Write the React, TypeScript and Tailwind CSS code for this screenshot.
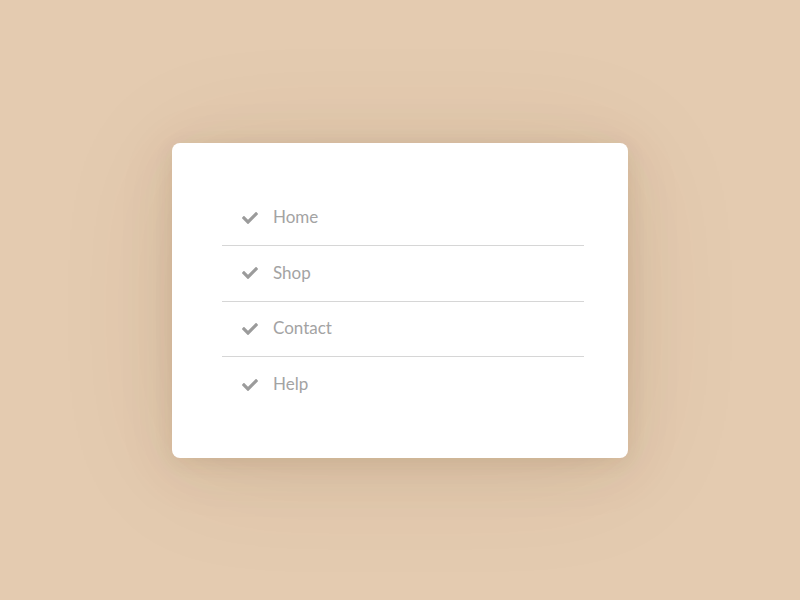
import { useState } from "react";

type Item = {
  label: string;
};

const items: Item[] = [
  { label: "Home" },
  { label: "Shop" },
  { label: "Contact" },
  { label: "Help" },
];

const Check = () => (
  <svg viewBox="0 0 512 512" className="h-[16px] w-[16px] fill-[#9b9b9b]">
    <path d="M173.9 439.4 7.5 273c-10-10-10-26.2 0-36.2l36.2-36.2c10-10 26.2-10 36.2 0L192 312.7 432.1 72.6c10-10 26.2-10 36.2 0l36.2 36.2c10 10 10 26.2 0 36.2L210.1 439.4c-10 10-26.2 10-36.2 0z" />
  </svg>
);

const App = () => {
  const [active, setActive] = useState(-1);

  return (
    <div className="flex h-[600px] w-[800px] items-center justify-center bg-[#e4cbb0]">
      <div
        className="h-[315px] w-[456px] rounded-[8px] bg-white pl-[50px] pr-[44px] pt-[48px]
        shadow-[0_4px_20px_rgba(90,50,10,0.08),0_10px_60px_rgba(90,50,10,0.09),0_10px_130px_rgba(90,50,10,0.08)]"
      >
        <ul className="font-['Lato','Open_Sans',sans-serif]">
          {items.map((item, i) => (
            <li
              key={item.label}
              onClick={() => setActive(i)}
              className={
                "flex h-[55.5px] cursor-pointer items-center gap-[15px] pl-[20px] text-[17px] text-[#a3a3a3] " +
                (i < items.length - 1 ? "border-b border-[#d6d6d6]" : "") +
                (active === i ? " text-[#777]" : "")
              }
            >
              <Check />
              <span className="-mt-[2px]">{item.label}</span>
            </li>
          ))}
        </ul>
      </div>
    </div>
  );
};

export default App;
